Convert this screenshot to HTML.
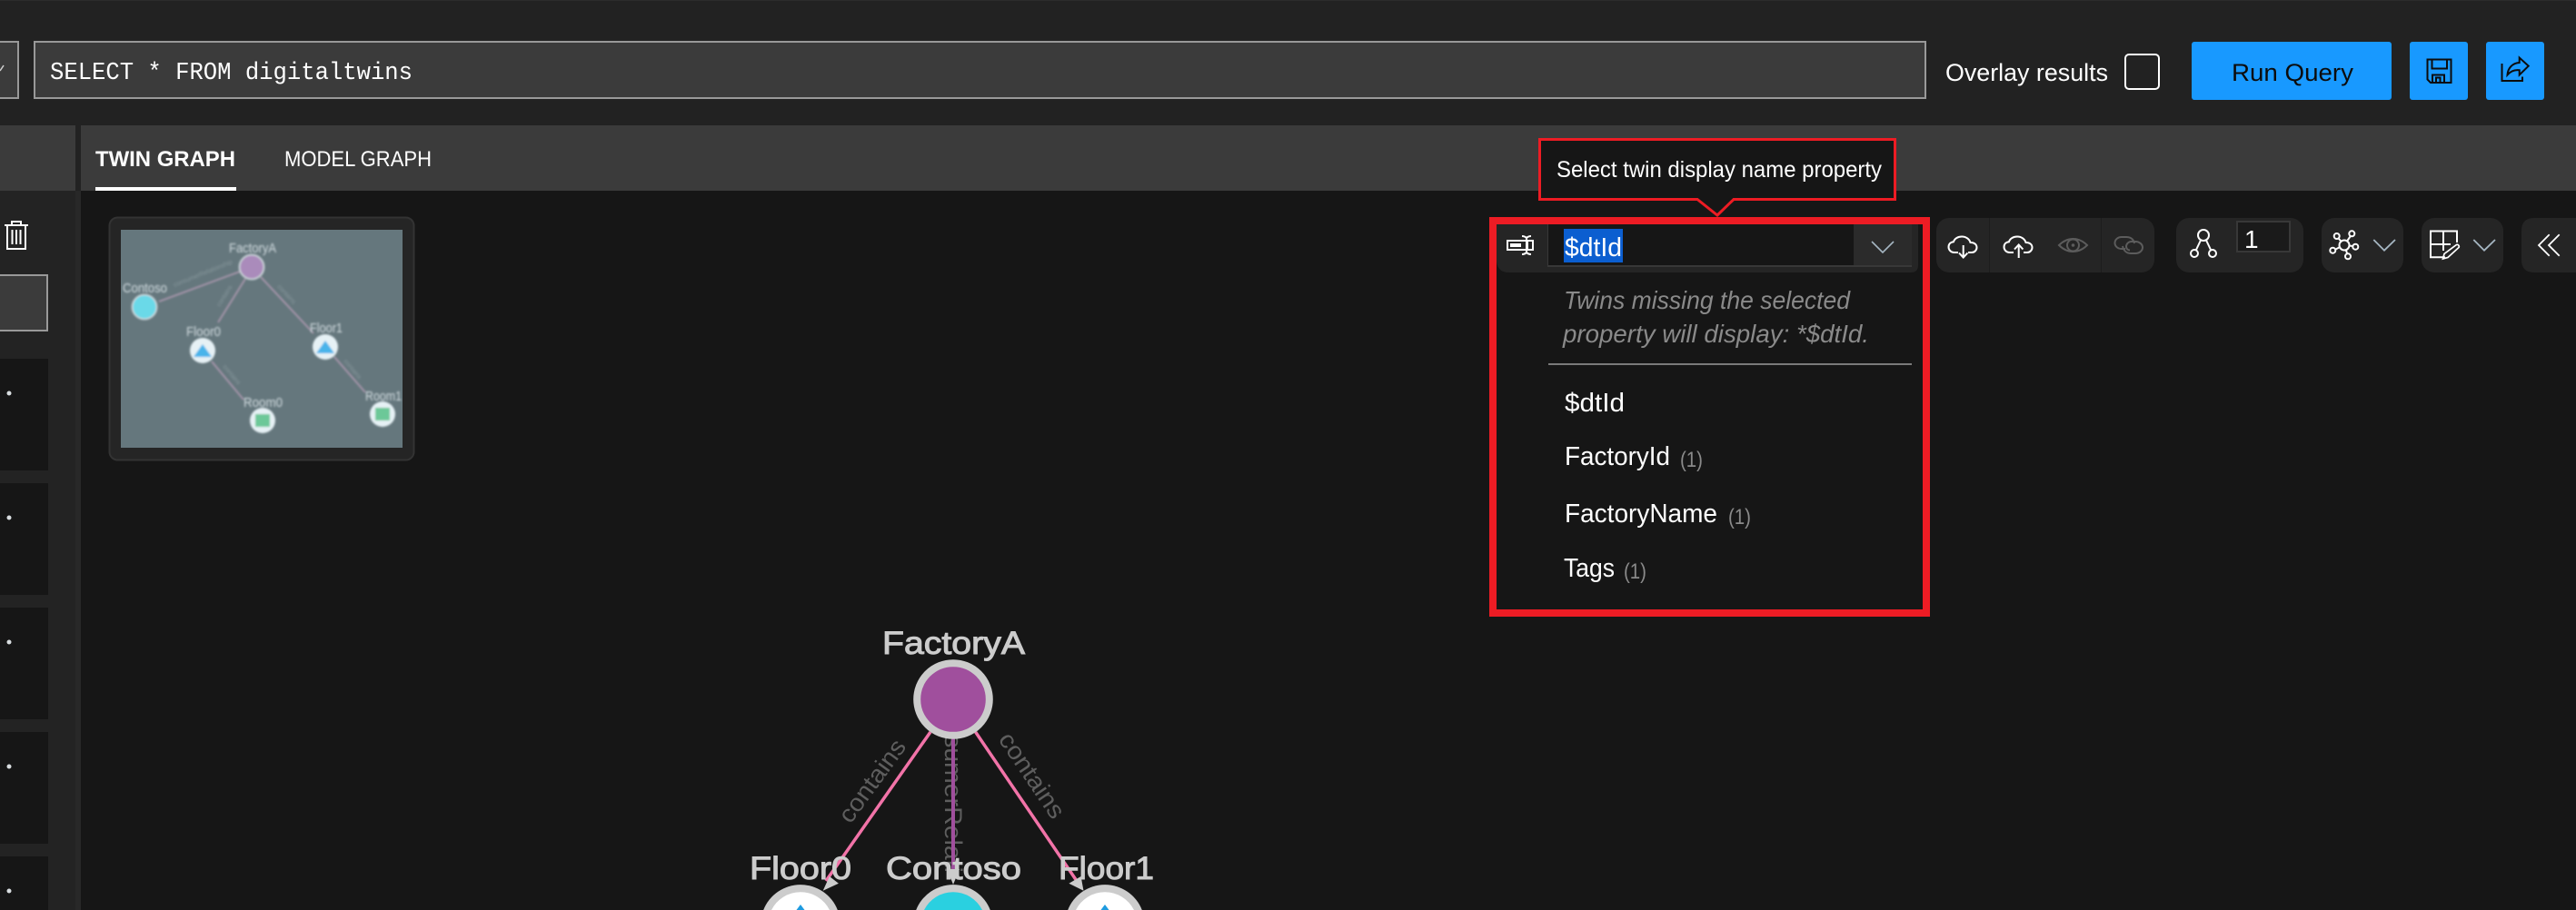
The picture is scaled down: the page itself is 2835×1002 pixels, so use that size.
<!DOCTYPE html>
<html lang="en">
<head>
<meta charset="utf-8">
<title>Twin Graph</title>
<style>
html,body{margin:0;padding:0;background:#161616;width:2835px;height:1002px;overflow:hidden}
#root{position:relative;width:2835px;height:1002px;overflow:hidden}
svg{display:block;position:absolute;left:0;top:0;overflow:hidden}
text{font-family:"Liberation Sans",sans-serif}
.m{font-family:"Liberation Mono",monospace}
</style>
</head>
<body>
<div id="root">
<svg width="2835" height="1002" viewBox="0 0 2835 1002" xmlns="http://www.w3.org/2000/svg">
<defs>
<filter id="b" x="-5%" y="-5%" width="110%" height="110%"><feGaussianBlur stdDeviation="1"/></filter>
<clipPath id="mm"><rect x="133" y="253" width="310" height="240"/></clipPath>
</defs>

<!-- backgrounds -->
<rect width="2835" height="1002" fill="#161616"/>
<rect width="2835" height="138" fill="#222222"/>
<rect width="2835" height="1" fill="#2c2c2c"/>
<rect x="0" y="138" width="83" height="72" fill="#3b3b3b"/>
<rect x="83" y="138" width="6" height="72" fill="#222222"/>
<rect x="89" y="138" width="2746" height="72" fill="#3b3b3b"/>
<rect x="0" y="210" width="89" height="792" fill="#232323"/>
<rect x="83" y="210" width="6" height="792" fill="#282828"/>

<!-- query row -->
<path d="M0 46 H20 V108 H0" fill="#3b3b3b" stroke="#999999" stroke-width="2"/>
<path d="M0 78 L4 72" fill="none" stroke="#d0d0d0" stroke-width="1.5"/>
<rect x="38" y="46" width="2081" height="62" fill="#3b3b3b" stroke="#999999" stroke-width="2"/>
<text class="m" x="55" y="87" font-size="27" fill="#ffffff" textLength="399" lengthAdjust="spacingAndGlyphs">SELECT * FROM digitaltwins</text>

<text x="2141" y="89" font-size="27" fill="#ffffff" textLength="179" lengthAdjust="spacingAndGlyphs">Overlay results</text>
<rect x="2339" y="60" width="37" height="38" rx="4" fill="none" stroke="#ffffff" stroke-width="2"/>

<rect x="2412" y="46" width="220" height="64" rx="3" fill="#1899ff"/>
<text x="2456" y="89" font-size="27" fill="#0c0c0c" textLength="134" lengthAdjust="spacingAndGlyphs">Run Query</text>

<rect x="2652" y="46" width="64" height="64" rx="3" fill="#1899ff"/>
<g fill="none" stroke="#0c0c0c" stroke-width="2">
<path d="M2671.5 65.5 H2697.5 V91 H2675 L2671.5 87.5 Z"/>
<path d="M2676.5 65.5 V75.5 H2693 V65.5"/>
<path d="M2677 91 V82.5 H2690 V91"/>
<path d="M2681 91 V85.5 H2685.5 V91"/>
</g>
<rect x="2736" y="46" width="64" height="64" rx="3" fill="#1899ff"/>
<g fill="none" stroke="#0c0c0c" stroke-width="2">
<path d="M2753.5 70 V89 H2776 V84.5"/>
<path d="M2759.5 82.5 C2760 75 2765 69.5 2772.7 69 V63.5 L2782.7 72.7 L2772.7 82.5 V77.3 C2767 76.5 2763 78.5 2759.5 82.5 Z"/>
</g>

<!-- tabs -->
<text x="105" y="183" font-size="24" font-weight="700" fill="#ffffff" textLength="154" lengthAdjust="spacingAndGlyphs">TWIN GRAPH</text>
<rect x="105" y="206" width="155" height="4" fill="#ffffff"/>
<text x="313" y="183" font-size="24" fill="#ffffff" textLength="162" lengthAdjust="spacingAndGlyphs">MODEL GRAPH</text>

<!-- left column -->
<g fill="none" stroke="#ffffff" stroke-width="2">
<path d="M5 248 H31"/>
<path d="M13 248 V244 H23 V248"/>
<path d="M8 248 V274 H28 V248"/>
<path d="M13.5 253 V269 M18 253 V269 M22.5 253 V269"/>
</g>
<path d="M0 303 H52 V364 H0" fill="#3b3b3b" stroke="#999999" stroke-width="2"/>
<g fill="#161616">
<rect x="0" y="395" width="53" height="123"/>
<rect x="0" y="532" width="53" height="123"/>
<rect x="0" y="669" width="53" height="123"/>
<rect x="0" y="806" width="53" height="123"/>
<rect x="0" y="943" width="53" height="59"/>
</g>
<g fill="#d8dde0">
<circle cx="10" cy="433" r="2.5"/>
<circle cx="10" cy="570" r="2.5"/>
<circle cx="10" cy="707" r="2.5"/>
<circle cx="10" cy="844" r="2.5"/>
<circle cx="10" cy="981" r="2.5"/>
</g>

<!-- minimap -->
<rect x="120.5" y="239.5" width="335" height="267" rx="9" fill="#252525" stroke="#333333" stroke-width="2"/>
<rect x="133" y="253" width="310" height="240" fill="#65777d"/>
<g clip-path="url(#mm)">
<g filter="url(#b)">
<g stroke="#a896ac" stroke-width="1.8" fill="none">
<path d="M264 299 L175 332"/>
<path d="M270 307 L240 355"/>
<path d="M287 305 L345 367"/>
<path d="M233 398 L268 440"/>
<path d="M368 393 L402 432"/>
</g>
<g fill="#87979c" font-size="7">
<text x="192" y="316" transform="rotate(-22 192 316)">consumerRelationship</text>
<text x="242" y="338" transform="rotate(-58 242 338)">contains</text>
<text x="305" y="316" transform="rotate(47 305 316)">contains</text>
<text x="245" y="404" transform="rotate(50 245 404)">contains</text>
<text x="378" y="398" transform="rotate(50 378 398)">contains</text>
</g>
<circle cx="277" cy="294" r="13.5" fill="#aa8bbb" stroke="#ccd6da" stroke-width="1.8"/>
<circle cx="159" cy="338" r="13.5" fill="#6ad9e8" stroke="#ccd6da" stroke-width="1.8"/>
<circle cx="223" cy="386" r="14" fill="#e6f1f5"/>
<path d="M223 379 L233 393 H213 Z" fill="#4ab4ea"/>
<circle cx="358" cy="382" r="14" fill="#e6f1f5"/>
<path d="M358 375 L368 389 H348 Z" fill="#4ab4ea"/>
<circle cx="289" cy="463" r="14" fill="#e6f1f5"/>
<rect x="281" y="456" width="16" height="14" fill="#6cc898"/>
<circle cx="421" cy="456" r="14" fill="#e6f1f5"/>
<rect x="413" y="449" width="16" height="14" fill="#6cc898"/>
<g fill="#d2dce0" font-size="14.5">
<text x="252" y="278" textLength="52" lengthAdjust="spacingAndGlyphs">FactoryA</text>
<text x="135" y="322" textLength="49" lengthAdjust="spacingAndGlyphs">Contoso</text>
<text x="205" y="370" textLength="38" lengthAdjust="spacingAndGlyphs">Floor0</text>
<text x="341" y="366" textLength="36" lengthAdjust="spacingAndGlyphs">Floor1</text>
<text x="268" y="448" textLength="43" lengthAdjust="spacingAndGlyphs">Room0</text>
<text x="402" y="441" textLength="40" lengthAdjust="spacingAndGlyphs">Room1</text>
</g>
</g>
</g>

<!-- graph -->
<g fill="#5e5e5e" font-size="27">
<text x="0" y="0" transform="translate(936 908) rotate(-54)" textLength="106" lengthAdjust="spacingAndGlyphs">contains</text>
<text x="0" y="0" transform="translate(1098 814) rotate(56)" textLength="108" lengthAdjust="spacingAndGlyphs">contains</text>
<text x="0" y="0" transform="translate(1040 763) rotate(90)" textLength="198" lengthAdjust="spacingAndGlyphs">consumerRelati</text>
</g>
<path d="M1024 806 L909 970" stroke="#f273a8" stroke-width="3.5" fill="none"/>
<path d="M1073.6 806 L1185 970" stroke="#f273a8" stroke-width="3.5" fill="none"/>
<path d="M1049 812 V960" stroke="#a04f9d" stroke-width="4" fill="none"/>

<circle cx="1049" cy="770" r="39.8" fill="#a04f9d" stroke="#cccccc" stroke-width="8"/>

<!-- bottom nodes, cut at the frame edge -->
<path d="M840.2 1002 A43.8 43.8 0 0 1 921.8 1002 Z" fill="#cccccc"/>
<path d="M849 1002 A35.8 35.8 0 0 1 913 1002 Z" fill="#ffffff"/>
<path d="M881 996 L885.5 1002 H876.5 Z" fill="#1e9be0"/>
<path d="M1008.2 1002 A43.8 43.8 0 0 1 1089.8 1002 Z" fill="#cccccc"/>
<path d="M1017 1002 A35.8 35.8 0 0 1 1081 1002 Z" fill="#2ad0e0"/>
<path d="M1175.2 1002 A43.8 43.8 0 0 1 1256.8 1002 Z" fill="#cccccc"/>
<path d="M1184 1002 A35.8 35.8 0 0 1 1248 1002 Z" fill="#ffffff"/>
<path d="M1216 996 L1220.5 1002 H1211.5 Z" fill="#1e9be0"/>

<g fill="#cccccc" font-size="35">
<text x="971" y="720" textLength="157" lengthAdjust="spacingAndGlyphs" stroke="#cccccc" stroke-width="1">FactoryA</text>
<text x="825" y="968" textLength="112" lengthAdjust="spacingAndGlyphs" stroke="#cccccc" stroke-width="1">Floor0</text>
<text x="975" y="968" textLength="149" lengthAdjust="spacingAndGlyphs" stroke="#cccccc" stroke-width="1">Contoso</text>
<text x="1165" y="968" textLength="105" lengthAdjust="spacingAndGlyphs" stroke="#cccccc" stroke-width="1">Floor1</text>
</g>
<g fill="#cccccc">
<path d="M905.7 980.7 L912.9 965 L922.9 972.7 Z"/>
<path d="M1049 974 L1042.5 957 H1056 Z"/>
<path d="M1192.5 980.7 L1189.6 965 L1176.4 972.7 Z"/>
</g>

<!-- toolbar groups -->
<g fill="#252525">
<rect x="2131" y="240" width="240" height="60" rx="14"/>
<rect x="2395" y="240" width="140" height="60" rx="14"/>
<rect x="2555" y="240" width="90" height="60" rx="14"/>
<rect x="2665" y="240" width="90" height="60" rx="14"/>
<path d="M2835 240 H2789 Q2775 240 2775 254 V286 Q2775 300 2789 300 H2835 Z"/>
</g>
<rect x="2189" y="240" width="1" height="60" fill="#1d1d1d"/>
<rect x="2312" y="240" width="1" height="60" fill="#1d1d1d"/>

<!-- cloud down -->
<g fill="none" stroke="#ffffff" stroke-width="2">
<path d="M2155 278 H2151 C2147 278 2144.5 275 2144.5 272 C2144.5 268.5 2147 266.5 2150 266.2 C2151 262.5 2155 260.5 2159 260.5 C2164 260.5 2167.5 263.5 2168.5 267 C2172.5 267 2175.5 269 2175.5 272.5 C2175.5 275.5 2173 278 2170 278 H2166"/>
<path d="M2160.7 270 V283 M2156 278.5 L2160.7 283.5 L2165.4 278.5"/>
</g>
<!-- cloud up -->
<g fill="none" stroke="#ffffff" stroke-width="2">
<path d="M2216 278 H2212 C2208 278 2205.5 275 2205.5 272 C2205.5 268.5 2208 266.5 2211 266.2 C2212 262.5 2216 260.5 2220 260.5 C2225 260.5 2228.5 263.5 2229.5 267 C2233.5 267 2236.5 269 2236.5 272.5 C2236.5 275.5 2234 278 2231 278 H2227"/>
<path d="M2221.7 284 V270 M2217 274.5 L2221.7 269.5 L2226.4 274.5"/>
</g>
<!-- eye -->
<g fill="none" stroke="#5c5c5c" stroke-width="2">
<path d="M2266 270 C2271 265 2276 263 2281.5 263 C2287 263 2292 265 2297 270 C2292 275 2287 277 2281.5 277 C2276 277 2271 275 2266 270 Z"/>
<circle cx="2281.5" cy="270" r="6.5"/>
<circle cx="2281.5" cy="270" r="1.8" fill="#5c5c5c" stroke="none"/>
</g>
<!-- link -->
<g fill="none" stroke="#5c5c5c" stroke-width="2">
<path d="M2349 268 C2348 263.5 2345 261 2340 261 H2335 C2330.5 261 2327.5 264 2327.5 267.5 C2327.5 271 2330.5 274 2335 274 H2339"/>
<path d="M2336 271 C2337 275.5 2340 279 2345 279 H2350 C2354.5 279 2358 276 2358 272.5 C2358 269 2354.5 266 2350 266 H2346 C2342 266 2340 269 2340 271.5 C2340 274 2342 275.5 2344 275.5"/>
</g>

<!-- graph depth -->
<g fill="none" stroke="#ffffff" stroke-width="2">
<circle cx="2425" cy="259" r="6"/>
<circle cx="2415" cy="279" r="4"/>
<circle cx="2435" cy="279" r="4"/>
<path d="M2422 264.5 L2417 275 M2428 264.5 L2433 275"/>
</g>
<rect x="2462" y="244" width="58" height="33" fill="#1a1a1a" stroke="#383838" stroke-width="2"/>
<text x="2470" y="273" font-size="28" fill="#ffffff">1</text>

<!-- network -->
<g fill="none" stroke="#ffffff" stroke-width="2">
<circle cx="2580" cy="270" r="5.5"/>
<circle cx="2571.7" cy="260" r="3"/>
<circle cx="2588.3" cy="257.3" r="3"/>
<circle cx="2592.3" cy="271.7" r="3"/>
<circle cx="2584" cy="282.3" r="3"/>
<circle cx="2567.3" cy="275.7" r="3"/>
<path d="M2573.6 262.4 L2576.5 265.8 M2586.8 260 L2583 265.5 M2589.3 271 L2585.5 270.5 M2583.2 279.3 L2581.8 275.2 M2570 274.8 L2574.8 272.2"/>
</g>
<path d="M2612.3 264 L2624 275.7 L2636 264" fill="none" stroke="#a5b6c2" stroke-width="1.8"/>

<!-- table edit -->
<g fill="none" stroke="#ffffff" stroke-width="2">
<path d="M2704 267 V254.5 H2675 V283.3 H2691"/>
<path d="M2689 254.5 V276 M2675 269 H2697"/>
<path d="M2703.5 269.5 C2705 268.5 2707 271 2706 272.5 L2694 283.5 L2688.5 285 L2690 279.5 Z" stroke-width="1.7"/>
</g>
<path d="M2722.3 264 L2734 275.7 L2746 264" fill="none" stroke="#a5b6c2" stroke-width="1.8"/>

<!-- collapse -->
<path d="M2805.7 258.3 L2794 270 L2805.7 281.7 M2816.7 258.3 L2805 270 L2816.7 281.7" fill="none" stroke="#ffffff" stroke-width="1.8"/>

<!-- display name group -->
<path d="M1647 247 H2111 V292 Q2111 300 2103 300 H1661 Q1647 300 1647 286 Z" fill="#252525"/>
<rect x="1647" y="300" width="469" height="371" fill="#161616"/>
<rect x="1704" y="247" width="400" height="47" fill="#161616"/>
<rect x="1704" y="292" width="400" height="2" fill="#383838"/>
<rect x="1703" y="247" width="1" height="47" fill="#383838"/>
<rect x="2040" y="247" width="64" height="45" fill="#2b2b2b"/>
<path d="M2060 266 L2072 278 L2084 266" fill="none" stroke="#a5b6c2" stroke-width="1.6"/>

<!-- rename icon -->
<g fill="none" stroke="#ffffff" stroke-width="2">
<rect x="1659" y="265" width="22" height="10"/>
<rect x="1662" y="268" width="12" height="4" fill="#ffffff" stroke="none"/>
<path d="M1681 265 H1687 V275 H1681"/>
<path d="M1675 260 C1678 260 1679 261 1680 262 C1681 261 1682 260 1685 260 M1680 262 V278 M1675 280 C1678 280 1679 279 1680 278 C1681 279 1682 280 1685 280"/>
</g>

<!-- input -->
<rect x="1721" y="252" width="65" height="37" fill="#0b5ed0"/>
<text x="1722" y="282" font-size="29" fill="#ffffff" textLength="63" lengthAdjust="spacingAndGlyphs">$dtId</text>

<!-- dropdown -->
<g fill="#8a8a8a" font-size="28" font-style="italic">
<text x="1721" y="340" textLength="315" lengthAdjust="spacingAndGlyphs">Twins missing the selected</text>
<text x="1720" y="377" textLength="337" lengthAdjust="spacingAndGlyphs">property will display: *$dtId.</text>
</g>
<rect x="1704" y="400" width="400" height="2" fill="#7a7a7a"/>
<g fill="#ffffff" font-size="29">
<text x="1722" y="453" textLength="66" lengthAdjust="spacingAndGlyphs">$dtId</text>
<text x="1722" y="512" textLength="116" lengthAdjust="spacingAndGlyphs">FactoryId</text>
<text x="1722" y="575" textLength="168" lengthAdjust="spacingAndGlyphs">FactoryName</text>
<text x="1721" y="635" textLength="56" lengthAdjust="spacingAndGlyphs">Tags</text>
</g>
<g fill="#8a8a8a" font-size="24">
<text x="1849" y="514" textLength="25" lengthAdjust="spacingAndGlyphs">(1)</text>
<text x="1902" y="577" textLength="25" lengthAdjust="spacingAndGlyphs">(1)</text>
<text x="1787" y="637" textLength="25" lengthAdjust="spacingAndGlyphs">(1)</text>
</g>

<!-- red highlight -->
<rect x="1643" y="243" width="477" height="432" fill="none" stroke="#ed1c24" stroke-width="8"/>
<path d="M1694.5 153.5 H2085.5 V219.5 H1908 L1890 237 L1868 219.5 H1694.5 Z" fill="#161616" stroke="#ed1c24" stroke-width="3"/>
<text x="1713" y="195" font-size="25" fill="#ffffff" textLength="358" lengthAdjust="spacingAndGlyphs">Select twin display name property</text>
</svg>
</div>
</body>
</html>
